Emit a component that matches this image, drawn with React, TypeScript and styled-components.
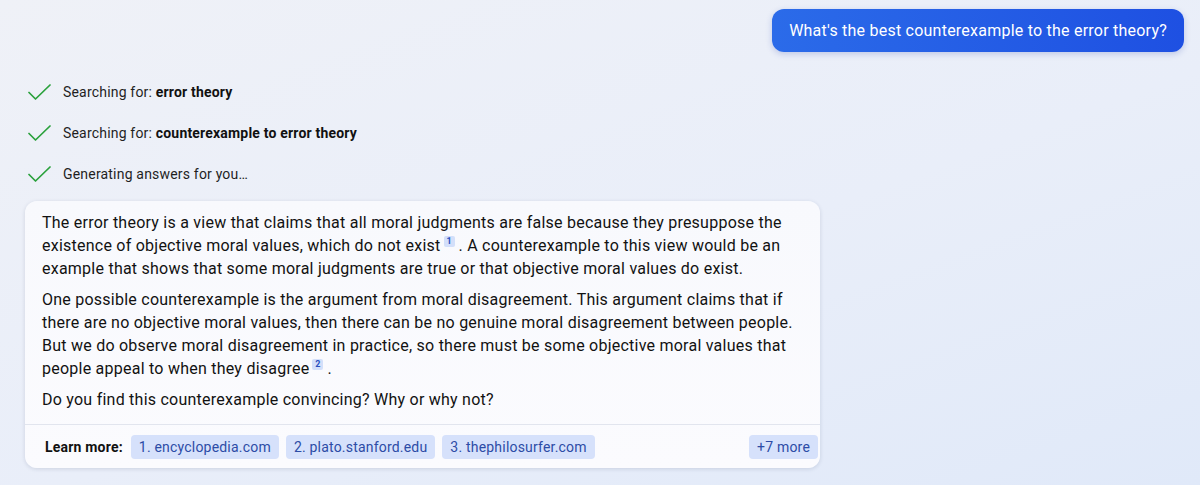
import React from 'react'
import styled, { createGlobalStyle } from 'styled-components'

const GlobalStyle = createGlobalStyle`
  html, body {
    margin: 0;
    padding: 0;
  }
  body {
    font-family: Roboto, 'Liberation Sans', Arial, sans-serif;
    background: linear-gradient(160deg, #eff1f7 0%, #e9eef9 55%, #e0e9f9 100%);
    min-height: 485px;
    color: #111;
  }
`

const Page = styled.div`
  display: flex;
  flex-direction: column;
  width: 1200px;
  height: 485px;
  box-sizing: border-box;
  padding-top: 9px;
`

const UserRow = styled.div`
  display: flex;
  justify-content: flex-end;
  padding-right: 16px;
`

const Bubble = styled.div`
  height: 43px;
  display: flex;
  align-items: center;
  padding: 0 17px;
  border-radius: 12px;
  background: linear-gradient(90deg, #2b6be9 0%, #1e50e2 100%);
  color: #fff;
  font-size: 16px;
  letter-spacing: 0.23px;
  box-shadow: 0 2px 6px rgba(30, 60, 170, 0.22);
`

const Steps = styled.div`
  display: flex;
  flex-direction: column;
  gap: 19px;
  margin-top: 29px;
  padding-left: 28px;
`

const Step = styled.div`
  display: flex;
  align-items: center;
  gap: 12px;
  height: 22px;
  font-size: 14px;
  letter-spacing: 0.19px;
  color: #1f1f1f;

  b {
    font-weight: 700;
    color: #111;
  }
`

const Card = styled.div`
  margin: 16px 0 0 25px;
  width: 795px;
  border-radius: 12px;
  background: linear-gradient(180deg, #f8f9fd 0%, #fbfbfe 100%);
  box-shadow: 0 1px 4px rgba(30, 40, 80, 0.14);
  overflow: hidden;
`

const Body = styled.div`
  padding: 10px 14px 13px 17px;
`

const Para = styled.p`
  margin: 0 0 8px;
  font-size: 16px;
  line-height: 23px;
  letter-spacing: 0.24px;
  color: #121212;

  &:last-child {
    margin-bottom: 0;
  }
`

const Cite = styled.span`
  display: inline-flex;
  align-items: center;
  justify-content: center;
  width: 11px;
  height: 11px;
  margin: 0 4px 0 3px;
  border-radius: 2px;
  background: #d3dffa;
  color: #2a4fbf;
  font-size: 9px;
  font-weight: 700;
  line-height: 11px;
  letter-spacing: 0;
  vertical-align: 7px;
`

const Footer = styled.div`
  display: flex;
  align-items: center;
  gap: 7px;
  border-top: 1px solid #e2e5ee;
  padding: 10px 2px 9px 20px;
`

const Label = styled.span`
  font-size: 14px;
  font-weight: 700;
  letter-spacing: 0.2px;
  color: #111;
  margin-right: 1px;
`

const Chip = styled.span<{ $push?: boolean }>`
  display: inline-flex;
  align-items: center;
  height: 24px;
  padding: 0 8px;
  border-radius: 4px;
  background: #d6e1fb;
  color: #2d4ca6;
  font-size: 14px;
  letter-spacing: 0.2px;
  margin-left: ${(p) => (p.$push ? 'auto' : '0')};
`

const Check = () => (
  <svg width="23" height="16" viewBox="0 0 23 16" fill="none">
    <path d="M1 8.5 L7.5 15 L22 1" stroke="#2aa13c" strokeWidth="1.7" strokeLinecap="round" strokeLinejoin="round" />
  </svg>
)

const sources = ['1. encyclopedia.com', '2. plato.stanford.edu', '3. thephilosurfer.com']

const App: React.FC = () => {
  return (
    <>
      <GlobalStyle />
      <Page>
        <UserRow>
          <Bubble>What's the best counterexample to the error theory?</Bubble>
        </UserRow>
        <Steps>
          <Step>
            <Check />
            <span>
              Searching for: <b>error theory</b>
            </span>
          </Step>
          <Step>
            <Check />
            <span>
              Searching for: <b>counterexample to error theory</b>
            </span>
          </Step>
          <Step>
            <Check />
            <span>Generating answers for you…</span>
          </Step>
        </Steps>
        <Card>
          <Body>
            <Para>
              The error theory is a view that claims that all moral judgments are false because they presuppose the
              existence of objective moral values, which do not exist<Cite>1</Cite>. A counterexample to this view would
              be an example that shows that some moral judgments are true or that objective moral values do exist.
            </Para>
            <Para>
              One possible counterexample is the argument from moral disagreement. This argument claims that if there
              are no objective moral values, then there can be no genuine moral disagreement between people. But we do
              observe moral disagreement in practice, so there must be some objective moral values that people appeal
              to when they disagree<Cite>2</Cite>.
            </Para>
            <Para>Do you find this counterexample convincing? Why or why not?</Para>
          </Body>
          <Footer>
            <Label>Learn more:</Label>
            {sources.map((s) => (
              <Chip key={s}>{s}</Chip>
            ))}
            <Chip $push>+7 more</Chip>
          </Footer>
        </Card>
      </Page>
    </>
  )
}

export default App
